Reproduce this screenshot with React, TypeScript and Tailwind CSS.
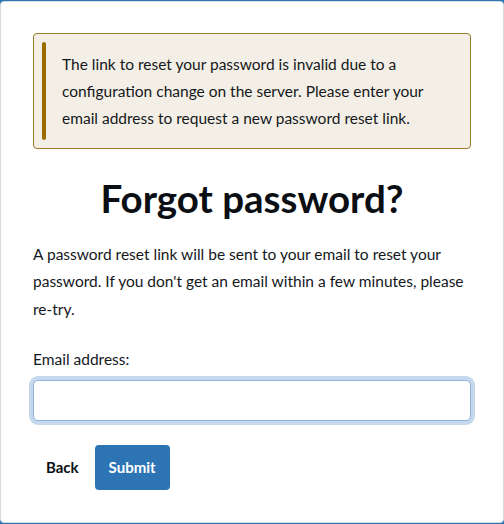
import React from "react";

const font = { fontFamily: "Lato, 'Noto Sans', sans-serif" };

const App = () => {
  return (
    <div className="min-h-screen bg-[#2d74b5] py-px" style={font}>
      <div className="h-[522px] rounded-[4px] border border-[#d7dce1] bg-white px-8 pt-[31px]">
        <div className="flex rounded-[4px] border border-[#9c7b22] bg-[#f4efe6] py-2 pl-2 pr-4">
          <div className="w-1 shrink-0 rounded-full bg-[#9a6c00]" />
          <p className="py-[8.5px] pl-4 text-[15.5px] leading-[27px] text-[#14181c]">
            The link to reset your password is invalid due to a configuration change on the server.
            Please enter your email address to request a new password reset link.
          </p>
        </div>

        <h1 className="mt-[25.5px] text-center text-[38.5px] font-bold leading-[46px] text-[#0b0f14]">
          Forgot password?
        </h1>

        <p className="mt-[20px] text-[15.5px] leading-[27.5px] text-[#14181c]">
          A password reset link will be sent to your email to reset your password. If you don't get
          an email within a few minutes, please re-try.
        </p>

        <label className="mt-[23px] block text-[15.5px] leading-[27px] text-[#14181c]">
          Email address:
        </label>
        <input
          type="email"
          className="mt-[6.5px] block h-[41px] w-[438px] rounded-[5px] border border-[#8db1d8] bg-white px-3 outline-none ring-4 ring-[#c6d9ec]"
        />

        <div className="mt-6 flex items-center gap-[16px] pl-[13px]">
          <button className="text-[15px] font-bold text-[#0b0f14]">Back</button>
          <button className="h-[45px] w-[75px] rounded-[4px] bg-[#2d74b5] text-[15px] font-bold text-white">
            Submit
          </button>
        </div>
      </div>
    </div>
  );
};

export default App;
